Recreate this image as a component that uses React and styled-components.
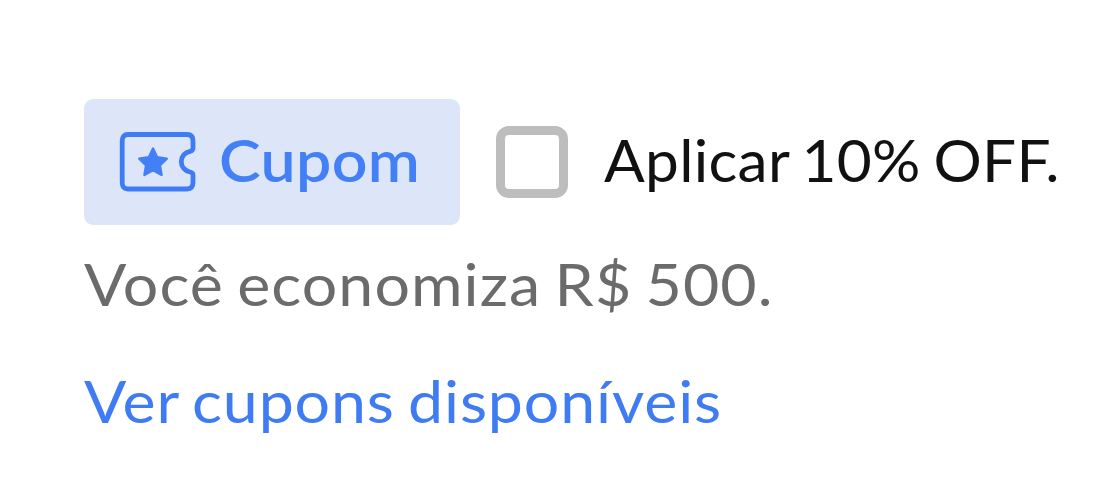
import { useState } from 'react';
import styled, { createGlobalStyle } from 'styled-components';

const CouponIcon = () => (
  <Icon viewBox="0 0 78 62" fill="none" aria-hidden="true">
    <path
      d="M9 3.5H68Q74 3.5 74 10V17Q74 19.8 71 20.3A10.5 10.5 0 0 0 71 41Q74 41.5 74 44V51.5Q74 58 68 58H9Q3.2 58 3.2 51.5V10Q3.2 3.5 9 3.5Z"
      stroke="#3f7cf4"
      strokeWidth="4.8"
      strokeLinejoin="round"
    />
    <path
      d="M34 17.5L38.2 26.2L47.8 27.6L40.9 34.3L42.6 43.9L34 39.3L25.4 43.9L27.1 34.3L20.2 27.6L29.8 26.2Z"
      fill="#4480f5"
      stroke="#4480f5"
      strokeWidth="2.4"
      strokeLinejoin="round"
    />
  </Icon>
);

const CouponPage = () => {
  const [applied, setApplied] = useState(false);

  return (
    <>
      <GlobalStyle />
      <Container>
        <CouponRow>
          <Badge>
            <CouponIcon />
            <BadgeText>Cupom</BadgeText>
          </Badge>
          <ApplyLabel>
            <Checkbox
              type="checkbox"
              checked={applied}
              onChange={(e) => setApplied(e.target.checked)}
            />
            <Text $color="#111" $stretch={1.04} $spacing="0.3px" $words="-3px">Aplicar 10% OFF.</Text>
          </ApplyLabel>
        </CouponRow>
        <Savings $color="#6b6b6b" $spacing="1px" $words="-3.6px">Você economiza R$ 500.</Savings>
        <CouponLink href="#cupons">
          <Text $color="#3f7cf4" $spacing="0.8px" $words="-3.4px">Ver cupons disponíveis</Text>
        </CouponLink>
      </Container>
    </>
  );
};

const GlobalStyle = createGlobalStyle`
  body {
    margin: 0;
    background: #fff;
    font-family: Lato, "Open Sans", sans-serif;
  }
`;

const Container = styled.main`
  box-sizing: border-box;
  height: 500px;
  padding: 99px 0 0 84px;
  overflow: hidden;
`;

const CouponRow = styled.div`
  display: flex;
  align-items: center;
  gap: 36px;
  height: 126px;
`;

const Badge = styled.div`
  box-sizing: border-box;
  display: flex;
  align-items: center;
  flex: none;
  gap: 22px;
  width: 376px;
  height: 126px;
  padding-left: 35px;
  border-radius: 9px;
  background: #dde6f8;
`;

const Icon = styled.svg`
  display: block;
  flex: none;
  width: 78px;
  height: 62px;
`;

const Text = styled.span`
  display: block;
  width: max-content;
  padding-bottom: 4px;
  color: ${({ $color }) => $color};
  font-size: 58px;
  line-height: 70px;
  letter-spacing: ${({ $spacing }) => $spacing};
  word-spacing: ${({ $words }) => $words || 'normal'};
  white-space: nowrap;
  transform: scaleX(${({ $stretch }) => $stretch || 1.08});
  transform-origin: left center;
`;

const BadgeText = styled(Text).attrs({ $color: '#4480f5', $spacing: '0.3px' })`
  font-weight: 600;
`;

const ApplyLabel = styled.label`
  display: flex;
  align-items: center;
  gap: 36px;
  cursor: pointer;
`;

const Checkbox = styled.input`
  appearance: none;
  box-sizing: border-box;
  flex: none;
  width: 72px;
  height: 72px;
  margin: 0;
  border: 9px solid #bdbdbd;
  border-radius: 13px;
  background: #fff;

  &:checked {
    background: #3f7cf4;
  }
`;

const Savings = styled(Text)`
  padding-top: 24px;
`;

const CouponLink = styled.a`
  display: block;
  width: max-content;
  padding-top: 43px;
  text-decoration: none;
`;

export default CouponPage;
